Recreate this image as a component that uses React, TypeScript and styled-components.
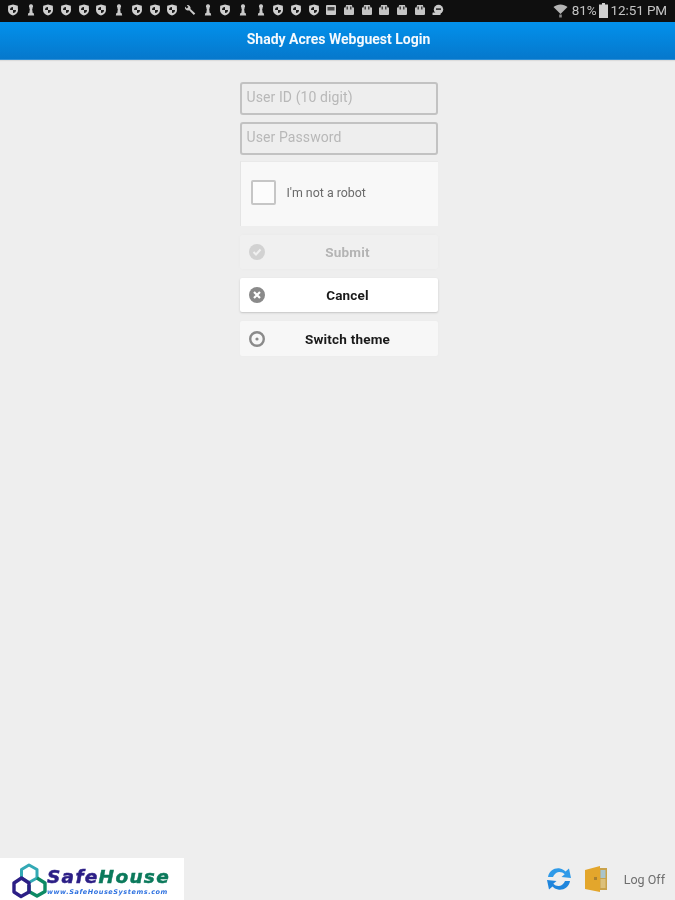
import React from "react";
import styled, { createGlobalStyle, css } from "styled-components";

const Global = createGlobalStyle`
  html, body { margin: 0; padding: 0; background: #eeeeee; }
  * { box-sizing: border-box; }
`;

const Page = styled.div`
  width: 675px;
  height: 900px;
  display: flex;
  flex-direction: column;
  overflow: hidden;
  background: #eeeeee;
  font-family: Roboto, "Liberation Sans", sans-serif;
  filter: blur(0.7px);
`;

const StatusBar = styled.div`
  height: 22px;
  flex: none;
  background: #0f0f0f;
  display: flex;
  align-items: center;
  justify-content: space-between;
  padding: 0 8px 2px 7px;
  color: #c4c4c4;
`;

const NotifIcons = styled.div`
  display: flex;
  align-items: center;
  gap: 5.7px;
`;

const StatusRight = styled.div`
  display: flex;
  align-items: center;
  font-size: 13.5px;
  letter-spacing: -0.1px;
`;

const Percent = styled.span`
  margin-left: 4px;
`;

const Clock = styled.span`
  margin-left: 3px;
`;

const Header = styled.header`
  height: 38px;
  flex: none;
  background: linear-gradient(#0291ec, #0678cc);
  border-bottom: 1px solid #2e8fd6;
  box-shadow: 0 1px 1px #dcdcdc;
  display: flex;
  align-items: center;
  justify-content: center;
  padding: 0 0 3px 2px;
`;

const Title = styled.h1`
  margin: 0;
  font-size: 14px;
  font-weight: 700;
  color: #f4f9fd;
`;

const Main = styled.main`
  flex: 1;
  display: flex;
  flex-direction: column;
  align-items: center;
  padding: 22px 0 0 2px;
`;

const Form = styled.form`
  width: 198px;
  display: flex;
  flex-direction: column;
`;

const Field = styled.input`
  width: 100%;
  height: 33px;
  margin-bottom: 7px;
  padding: 0 5px 3px;
  background: #eeeeee;
  border: 2px solid #c2c2c2;
  border-radius: 3px;
  font: 14px Roboto, "Liberation Sans", sans-serif;
  letter-spacing: 0.1px;
  outline: none;
  &::placeholder { color: #b8b8b8; opacity: 1; }
`;

const Captcha = styled.div`
  height: 65px;
  margin: -1px 0 9px;
  padding: 0 0 3px 10px;
  display: flex;
  align-items: center;
  gap: 11px;
  background: #f8f8f8;
  border-left: 1px solid #e4e4e4;
  border-top: 1px solid #e9e9e9;
`;

const CheckBox = styled.span`
  width: 25px;
  height: 25px;
  background: #fcfcfc;
  border: 2px solid #c6c6c6;
  border-radius: 2px;
`;

const CaptchaLabel = styled.span`
  font-size: 12.4px;
  color: #6a6a6a;
`;

type Variant = "disabled" | "primary" | "plain";

const Button = styled.button<{ $variant: Variant }>`
  position: relative;
  width: 100%;
  height: 34px;
  margin-bottom: 9px;
  padding: 0 0 0 18px;
  border: none;
  border-radius: 2px;
  font: 700 13.5px Roboto, "Liberation Sans", sans-serif;
  letter-spacing: 0.2px;
  display: flex;
  align-items: center;
  justify-content: center;
  color: #1a1a1a;
  ${(p) =>
    p.$variant === "disabled" &&
    css`
      background: #f0f0f0;
      color: #b4b4b4;
      box-shadow: 0 0 2px #e8e8e8;
    `}
  ${(p) =>
    p.$variant === "primary" &&
    css`
      background: #ffffff;
      box-shadow: 0 1px 2px #c4c4c4;
    `}
  ${(p) =>
    p.$variant === "plain" &&
    css`
      height: 35px;
      background: #f7f7f7;
      box-shadow: 0 0 1px #e6e6e6;
    `}
`;

const ButtonIcon = styled.svg<{ $top?: number }>`
  position: absolute;
  left: 9px;
  top: ${(p) => p.$top ?? 9}px;
  width: 16px;
  height: 16px;
`;

const Footer = styled.footer`
  height: 42px;
  flex: none;
  display: flex;
  align-items: center;
  justify-content: space-between;
`;

const LogoBox = styled.div`
  width: 184px;
  height: 42px;
  background: #ffffff;
  display: flex;
  align-items: center;
  padding: 4px 0 0 12px;
  gap: 0;
`;

const LogoText = styled.div`
  display: flex;
  flex-direction: column;
  align-items: flex-start;
  font-family: "DejaVu Sans", sans-serif;
  font-style: italic;
  font-weight: 700;
`;

const LogoName = styled.div`
  font-size: 18.5px;
  line-height: 22px;
  letter-spacing: 1.3px;
  color: #2c1f86;
  -webkit-text-stroke: 0.5px currentColor;
`;

const LogoHouse = styled.span`
  color: #0c7a5c;
`;

const LogoUrl = styled.div`
  font-size: 6.5px;
  line-height: 8px;
  letter-spacing: 0.55px;
  color: #2f72e0;
`;

const FooterActions = styled.div`
  display: flex;
  align-items: center;
  padding: 0 10px 0 0;
`;

const LogOff = styled.span`
  margin-left: 16px;
  font-size: 12.5px;
  color: #6e6e6e;
`;

const ActionIcon = styled.svg<{ $gap?: number }>`
  margin-left: ${(p) => p.$gap ?? 0}px;
`;

type Kind = "S" | "P" | "W" | "I" | "B" | "E";

const NotifIcon = ({ kind }: { kind: Kind }) => (
  <svg width="12" height="12" viewBox="0 0 12 12">
    {kind === "S" && (
      <>
        <path d="M6 .4 10.800 1.800 11 6c0 2.700-2.200 4.800-5 5.600C3.200 10.800 1 8.700 1 6l.2-4.200z" fill="#cfcfcf" />
        <path d="M6 3a3 3 0 0 0-3 3h3V3zM6 6v3a3 3 0 0 0 3-3z" fill="#1c1c1c" />
      </>
    )}
    {kind === "P" && (
      <path
        d="M6 .3a2 2 0 0 1 1.500 3.400l.5.900H7.100l.6 4.400h.9l.6 2.500H2.800l.6-2.500h.9l.6-4.400H4l.5-.9A2 2 0 0 1 6 .3z"
        fill="#c9c9c9"
      />
    )}
    {kind === "W" && (
      <path
        d="M1 2.600 2.800 4.400 4.400 3 2.700 1.200A3 3 0 0 1 6.500 4.900l4.800 4.600-1.500 1.600-4.700-4.900A3 3 0 0 1 1 2.600z"
        fill="#c9c9c9"
      />
    )}
    {kind === "I" && (
      <>
        <rect x="1" y="1" width="10" height="10" rx="1" fill="#c9c9c9" />
        <rect x="2.500" y="3" width="7" height="3.500" fill="#4a4a4a" />
      </>
    )}
    {kind === "B" && (
      <>
        <path d="M1 3.500h1.500l.6-2.500h5.800l.6 2.500H11v6.500a1 1 0 0 1-1 1H2a1 1 0 0 1-1-1z" fill="#c4c4c4" />
        <rect x="3.500" y="2.500" width="1.500" height="3" fill="#444" />
        <rect x="7" y="2.500" width="1.500" height="3" fill="#444" />
      </>
    )}
    {kind === "E" && (
      <>
        <circle cx="6.500" cy="5.500" r="4.700" fill="#c9c9c9" />
        <rect x="4" y="4.400" width="5" height="1.400" fill="#1a1a1a" />
        <rect x="0.500" y="8.500" width="8" height="2.500" rx="0.500" fill="#c9c9c9" />
      </>
    )}
  </svg>
);

const notifKinds: Kind[] = [
  "S", "P", "S", "S", "S", "S", "P", "S", "S", "S", "W", "P", "S",
  "P", "P", "S", "S", "S", "I", "B", "B", "B", "B", "B", "E",
];

const Wifi = () => (
  <svg width="15" height="15" viewBox="0 0 15 15">
    <path d="M.5 4C4.500.6 10.500.6 14.500 4L7.500 11z" fill="#b4b4b4" />
    <path d="M6.200 11.500h2.600v3H6.200z" fill="#888" />
  </svg>
);

const Battery = () => (
  <svg width="9" height="15" viewBox="0 0 9 15" style={{ marginLeft: 2 }}>
    <path d="M3 0h3v1.500h3V15H0V1.500h3z" fill="#d0d0d0" />
  </svg>
);

const LogoMark = () => (
  <svg width="35" height="36" viewBox="0 0 35 36">
    <path d="M17 2 25 6.500V15l-8 4.500L9.500 15V6.500z" fill="none" stroke="#33a9b5" strokeWidth="3" strokeLinejoin="round" />
    <path d="M25 15 33 20v8.500l-8 4.500-8-4.500V22" fill="none" stroke="#0c8a64" strokeWidth="3.400" strokeLinejoin="round" />
    <path d="M9.500 15 17 20v9l-8 4.500-7-4.500v-9z" fill="none" stroke="#2c1f86" strokeWidth="3.400" strokeLinejoin="round" />
  </svg>
);

const Refresh = () => (
  <ActionIcon width="28" height="28" viewBox="0 0 28 28">
    <path
      d="M3 12C4 5.500 10 2.500 15 3.500c2.500.5 4 1.500 5.500 3L24 3.500 26 13l-9.500-1 3.200-2.800C18 7.500 16 6.800 14 7c-3 .2-5 2.500-6 5z"
      fill="#2f9ae8"
    />
    <path
      d="M25 16c-1 6.500-7 9.500-12 8.500-2.500-.5-4-1.500-5.500-3L4 24.500 2 15l9.500 1-3.200 2.800c1.700 1.700 3.700 2.400 5.700 2.200 3-.2 5-2.500 6-5z"
      fill="#1f85dc"
    />
  </ActionIcon>
);

const Door = () => (
  <ActionIcon $gap={11} width="24" height="28" viewBox="0 0 24 28">
    <rect x="15" y="3" width="8" height="22" fill="#c9a24a" />
    <rect x="16.500" y="5" width="5" height="8" fill="#a9c4cc" />
    <rect x="16.500" y="14" width="5" height="9" fill="#dcc07a" />
    <path d="M1 5 16 1v26L1 24z" fill="#e3a62c" />
    <rect x="10" y="12" width="3" height="3" fill="#a98030" />
  </ActionIcon>
);

export default function App() {
  return (
    <Page>
      <Global />
      <StatusBar>
        <NotifIcons>
          {notifKinds.map((k, i) => (
            <NotifIcon key={i} kind={k} />
          ))}
        </NotifIcons>
        <StatusRight>
          <Wifi />
          <Percent>81%</Percent>
          <Battery />
          <Clock>12:51 PM</Clock>
        </StatusRight>
      </StatusBar>
      <Header>
        <Title>Shady Acres Webguest Login</Title>
      </Header>
      <Main>
        <Form>
          <Field placeholder="User ID (10 digit)" />
          <Field placeholder="User Password" />
          <Captcha>
            <CheckBox />
            <CaptchaLabel>I'm not a robot</CaptchaLabel>
          </Captcha>
          <Button type="button" $variant="disabled">
            <ButtonIcon viewBox="0 0 16 16">
              <circle cx="8" cy="8" r="8" fill="#d2d2d2" />
              <path d="M4.500 8 7 10.500 11.500 5.500" fill="none" stroke="#f0f0f0" strokeWidth="2" />
            </ButtonIcon>
            Submit
          </Button>
          <Button type="button" $variant="primary">
            <ButtonIcon viewBox="0 0 16 16">
              <circle cx="8" cy="8" r="8" fill="#8a8a8a" />
              <path d="M5 5 11 11M11 5 5 11" stroke="#ffffff" strokeWidth="2.200" />
            </ButtonIcon>
            Cancel
          </Button>
          <Button type="button" $variant="plain">
            <ButtonIcon $top={10} viewBox="0 0 16 16">
              <circle cx="8" cy="8" r="6.800" fill="none" stroke="#8a8a8a" strokeWidth="2.400" />
              <circle cx="8" cy="8" r="1.600" fill="#8a8a8a" />
            </ButtonIcon>
            Switch theme
          </Button>
        </Form>
      </Main>
      <Footer>
        <LogoBox>
          <LogoMark />
          <LogoText>
            <LogoName>
              Safe<LogoHouse>House</LogoHouse>
            </LogoName>
            <LogoUrl>www.SafeHouseSystems.com</LogoUrl>
          </LogoText>
        </LogoBox>
        <FooterActions>
          <Refresh />
          <Door />
          <LogOff>Log Off</LogOff>
        </FooterActions>
      </Footer>
    </Page>
  );
}
